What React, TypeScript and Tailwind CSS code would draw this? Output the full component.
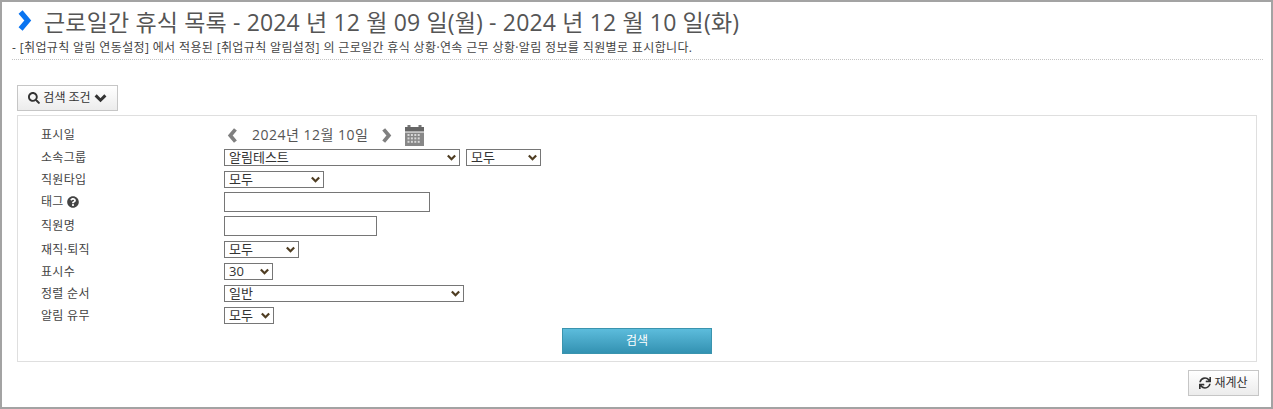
import { FaQuestionCircle, FaSearch, FaSync } from 'react-icons/fa'

const fontStack = "font-['Open_Sans','Noto_Sans_CJK_KR',sans-serif]"

function Chevron({ dir, className }: { dir: 'left' | 'right' | 'down'; className: string }) {
  const points = { left: '9,1.5 3.5,8 9,14.5', right: '5,1.5 10.5,8 5,14.5', down: '1.5,4.5 8,11 14.5,4.5' }[dir]
  return (
    <svg viewBox="0 0 16 16" className={className} fill="none" stroke="currentColor" strokeWidth={4}>
      <polyline points={points} />
    </svg>
  )
}

function CalendarIcon() {
  const cells = []
  for (let y = 9; y < 19; y += 3.4) {
    for (let x = 2.5; x < 16; x += 3.4) {
      cells.push(<rect key={`${x}-${y}`} x={x} y={y} width="2" height="2" fill="#d8d8d8" />)
    }
  }
  return (
    <svg viewBox="0 0 19 21" className="ml-[11px] h-[21px] w-[19px]">
      <rect x="2.5" y="0" width="3" height="4" fill="#777" />
      <rect x="13.5" y="0" width="3" height="4" fill="#777" />
      <rect x="0" y="2" width="19" height="4.5" fill="#666" />
      <rect x="0" y="7.5" width="19" height="13.5" fill="#888" />
      {cells}
    </svg>
  )
}

function Select({ value, width }: { value: string; width: string }) {
  return (
    <div className={`relative h-[17px] ${width}`}>
      <select className="block h-[17px] w-full appearance-none rounded-none border border-[#767676] bg-white pl-[4px] text-[13px] leading-[15px] text-[#333]">
        <option>{value}</option>
      </select>
      <Chevron dir="down" className="pointer-events-none absolute right-[3px] top-[4px] h-[9px] w-[11px] text-[#4f3d22]" />
    </div>
  )
}

function Row({ label, className, children }: { label: React.ReactNode; className: string; children: React.ReactNode }) {
  return (
    <div className={`flex items-center ${className}`}>
      <div className="w-[183px] shrink-0 text-[12px] tracking-[0.3px] text-[#444]">{label}</div>
      <div className="flex items-center">{children}</div>
    </div>
  )
}

export default function App() {
  return (
    <div className={`${fontStack} h-[409px] w-[1273px] border-2 border-[#a3a3a3] bg-white text-[#333]`}>
      {/* Title */}
      <div className="ml-[10px] mr-[8px] h-[58px] border-b border-dotted border-[#c4c4c4]">
        <div className="flex h-[34px] items-end">
          <Chevron dir="right" className="mb-[5px] ml-[2px] h-[21px] w-[21px] text-[#0a74f0]" />
          <h1 className="ml-[9px] translate-y-[1px] text-[23px] leading-[30px] tracking-[0.16px] text-[#555]">
            근로일간 휴식 목록 - 2024 년 12 월 09 일(월) - 2024 년 12 월 10 일(화)
          </h1>
        </div>
        <p className="mt-[5px] text-[12px] leading-[14px] tracking-[0.36px] text-[#444]">
          - [취업규칙 알림 연동설정] 에서 적용된 [취업규칙 알림설정] 의 근로일간 휴식 상황·연속 근무 상황·알림 정보를 직원별로 표시합니다.
        </p>
      </div>

      {/* Search toggle */}
      <button className="ml-[15px] mt-[25px] flex h-[26px] w-[101px] items-center justify-center gap-[3px] border border-[#c6c6c6] bg-gradient-to-b from-white to-[#ececec] text-[12px] text-[#333]">
        <FaSearch className="h-[12px] w-[12px]" />
        <span>검색 조건</span>
        <Chevron dir="down" className="h-[12px] w-[13px]" />
      </button>

      {/* Filter panel */}
      <div className="ml-[15px] mt-[4px] h-[247px] w-[1240px] border border-[#dfdfdf] px-[23px] pt-[6px]">
        <Row label="표시일" className="h-[26px]">
          <Chevron dir="left" className="ml-[3px] h-[15px] w-[15px] text-[#808080]" />
          <span className="ml-[10px] -translate-y-[1px] text-[14px] tracking-[0.5px] text-[#555]">2024년 12월 10일</span>
          <Chevron dir="right" className="ml-[11px] h-[15px] w-[15px] text-[#808080]" />
          <CalendarIcon />
        </Row>
        <Row label="소속그룹" className="mt-[1px] h-[17px]">
          <Select value="알림테스트" width="w-[236px]" />
          <div className="ml-[6px]"><Select value="모두" width="w-[75px]" /></div>
        </Row>
        <Row label="직원타입" className="mt-[5px] h-[17px]">
          <Select value="모두" width="w-[100px]" />
        </Row>
        <Row label={<span className="flex items-center gap-[3px]">태그 <FaQuestionCircle className="h-[12px] w-[12px] text-[#444]" /></span>} className="mt-[4px] h-[20px]">
          <input className="h-[20px] w-[206px] border border-[#767676] bg-white" />
        </Row>
        <Row label="직원명" className="mt-[4px] h-[20px]">
          <input className="h-[20px] w-[153px] border border-[#767676] bg-white" />
        </Row>
        <Row label="재직·퇴직" className="mt-[5px] h-[17px]">
          <Select value="모두" width="w-[75px]" />
        </Row>
        <Row label="표시수" className="mt-[5px] h-[17px]">
          <Select value="30" width="w-[49px]" />
        </Row>
        <Row label="정렬 순서" className="mt-[5px] h-[17px]">
          <Select value="일반" width="w-[240px]" />
        </Row>
        <Row label="알림 유무" className="mt-[5px] h-[17px]">
          <Select value="모두" width="w-[50px]" />
        </Row>
        <div className="mt-[4px] flex justify-center">
          <button className="h-[26px] w-[150px] border border-[#3a94ae] bg-gradient-to-b from-[#5cbcdc] to-[#3392b2] text-[12px] text-white">
            검색
          </button>
        </div>
      </div>

      {/* Recalculate */}
      <div className="mr-[12px] mt-[8px] flex justify-end">
        <button className="flex h-[26px] w-[71px] items-center justify-center gap-[3px] border border-[#c6c6c6] bg-gradient-to-b from-white to-[#ececec] text-[12px] text-[#333]">
          <FaSync className="h-[12px] w-[12px]" />
          <span>재계산</span>
        </button>
      </div>
    </div>
  )
}
